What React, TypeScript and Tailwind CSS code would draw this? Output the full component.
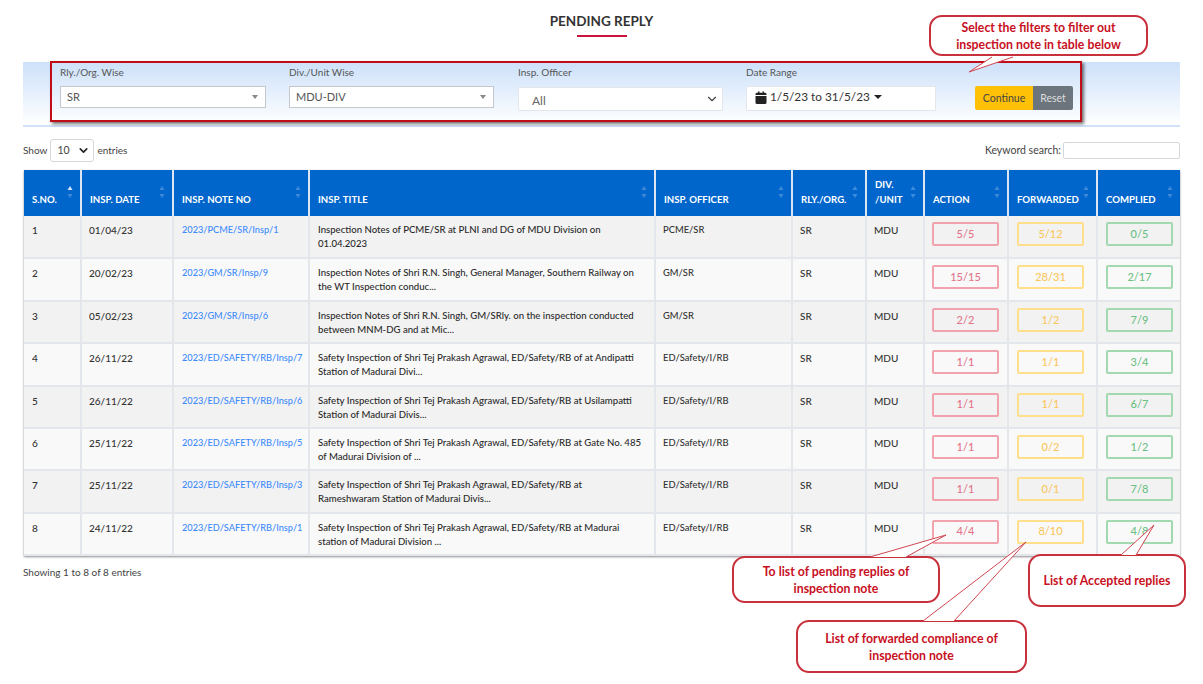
import React from 'react';
import { ChevronDown } from 'lucide-react';

const font = '[font-family:Lato,"Noto_Sans",sans-serif]';

const columns = [
  { label: 'S.NO.', width: 'w-[57px]', active: true },
  { label: 'INSP. DATE', width: 'w-[92px]' },
  { label: 'INSP. NOTE NO', width: 'w-[136px]' },
  { label: 'INSP. TITLE', width: 'w-[346px]' },
  { label: 'INSP. OFFICER', width: 'w-[137px]' },
  { label: 'RLY./ORG.', width: 'w-[74px]' },
  { label: 'DIV.\n/UNIT', width: 'w-[58px]' },
  { label: 'ACTION', width: 'w-[84px]' },
  { label: 'FORWARDED', width: 'w-[89px]' },
  { label: 'COMPLIED', width: 'w-[83px]' },
];

const rows = [
  ['01/04/23', '2023/PCME/SR/Insp/1', 'Inspection Notes of PCME/SR at PLNI and DG of MDU Division on\n01.04.2023', 'PCME/SR', '5/5', '5/12', '0/5'],
  ['20/02/23', '2023/GM/SR/Insp/9', 'Inspection Notes of Shri R.N. Singh, General Manager, Southern Railway on\nthe WT Inspection conduc...', 'GM/SR', '15/15', '28/31', '2/17'],
  ['05/02/23', '2023/GM/SR/Insp/6', 'Inspection Notes of Shri R.N. Singh, GM/SRly. on the inspection conducted\nbetween MNM-DG and at Mic...', 'GM/SR', '2/2', '1/2', '7/9'],
  ['26/11/22', '2023/ED/SAFETY/RB/Insp/7', 'Safety Inspection of Shri Tej Prakash Agrawal, ED/Safety/RB of at Andipatti\nStation of Madurai Divi...', 'ED/Safety/I/RB', '1/1', '1/1', '3/4'],
  ['26/11/22', '2023/ED/SAFETY/RB/Insp/6', 'Safety Inspection of Shri Tej Prakash Agrawal, ED/Safety/RB at Usilampatti\nStation of Madurai Divis...', 'ED/Safety/I/RB', '1/1', '1/1', '6/7'],
  ['25/11/22', '2023/ED/SAFETY/RB/Insp/5', 'Safety Inspection of Shri Tej Prakash Agrawal, ED/Safety/RB at Gate No. 485\nof Madurai Division of ...', 'ED/Safety/I/RB', '1/1', '0/2', '1/2'],
  ['25/11/22', '2023/ED/SAFETY/RB/Insp/3', 'Safety Inspection of Shri Tej Prakash Agrawal, ED/Safety/RB at\nRameshwaram Station of Madurai Divis...', 'ED/Safety/I/RB', '1/1', '0/1', '7/8'],
  ['24/11/22', '2023/ED/SAFETY/RB/Insp/1', 'Safety Inspection of Shri Tej Prakash Agrawal, ED/Safety/RB at Madurai\nstation of Madurai Division ...', 'ED/Safety/I/RB', '4/4', '8/10', '4/8'],
];

const SortIcon = ({ active }: { active?: boolean }) => (
  <svg width="6" height="14" viewBox="0 0 6 14" className="absolute right-[7px] top-[15px]">
    <path d="M3 1 L5.5 5 H0.5 Z" fill={active ? '#cfe3fa' : '#3f8ad8'} />
    <path d="M3 13 L5.5 9 H0.5 Z" fill="#3f8ad8" />
  </svg>
);

const Badge = ({ value, tone }: { value: string; tone: 'red' | 'yellow' | 'green' }) => {
  const cls = {
    red: 'border-[#f0a3ad] text-[#e4738a]',
    yellow: 'border-[#ffdf8c] text-[#fbc65c]',
    green: 'border-[#a3d9b1] text-[#6cc084]',
  }[tone];
  return (
    <div className={`flex h-[24px] w-[67px] items-center justify-center rounded-[2px] border-2 text-[11px] ${cls}`}>
      {value}
    </div>
  );
};

const Callout = ({ className, lines }: { className: string; lines: string[] }) => (
  <div className={`absolute flex flex-col items-center justify-center rounded-[13px] border-2 border-[#c8303c] bg-white text-[12.3px] font-bold leading-[17px] text-[#c8101e] ${className}`}>
    {lines.map(line => (
      <span key={line}>{line}</span>
    ))}
  </div>
);

export default function App() {
  return (
    <div className={`relative h-[684px] w-[1203px] overflow-hidden bg-white text-[#333] ${font}`}>
      {/* Heading */}
      <div className="flex flex-col items-center pt-[12px]">
        <h1 className="text-[13.5px] font-bold leading-[18px] text-[#333]">PENDING REPLY</h1>
        <div className="mt-[5px] h-[2px] w-[50px] bg-[#c8143c]" />
      </div>

      {/* Filters */}
      <div className="ml-[23px] mt-[25px] flex h-[65px] w-[1157px] border-b-2 border-[#cfe2f8] bg-gradient-to-b from-[#cde1fa] to-white pl-[37px] pt-[4px]">
        <div className="w-[229px]">
          <div className="text-[10px] leading-[13px] text-[#555]">Rly./Org. Wise</div>
          <div className="mt-[7px] flex h-[22px] w-[206px] items-center justify-between border border-[#c4c8cc] bg-white pl-[6px] pr-[7px] text-[11px] text-[#555]">
            SR
            <span className="h-0 w-0 border-x-[3px] border-t-[4px] border-x-transparent border-t-[#888]" />
          </div>
        </div>
        <div className="w-[229px]">
          <div className="text-[10px] leading-[13px] text-[#555]">Div./Unit Wise</div>
          <div className="mt-[7px] flex h-[22px] w-[205px] items-center justify-between border border-[#c4c8cc] bg-white pl-[6px] pr-[7px] text-[11px] text-[#555]">
            MDU-DIV
            <span className="h-0 w-0 border-x-[3px] border-t-[4px] border-x-transparent border-t-[#888]" />
          </div>
        </div>
        <div className="w-[228px]">
          <div className="text-[10px] leading-[13px] text-[#555]">Insp. Officer</div>
          <div className="mt-[8px] flex h-[24px] w-[205px] items-center justify-between rounded-[2px] border border-[#e3e6ea] bg-white pl-[13px] pr-[3px] pt-[4px] text-[12px] text-[#666]">
            All
            <ChevronDown size={14} strokeWidth={2} className="-mt-[4px] text-[#444]" />
          </div>
        </div>
        <div className="w-[229px]">
          <div className="text-[10px] leading-[13px] text-[#555]">Date Range</div>
          <div className="mt-[7px] flex h-[25px] w-[190px] items-center gap-[3px] border border-[#e3e6ea] bg-white pb-[3px] pl-[8px] text-[11.8px] text-[#333]">
            <svg width="12" height="13" viewBox="0 0 12 13" fill="#222">
              <path d="M0.5 5 H11.5 V11.5 Q11.5 13 10 13 H2 Q0.5 13 0.5 11.5 Z" />
              <path d="M0.5 4 V3.2 Q0.5 1.8 2 1.8 H3 V0.5 H4.5 V1.8 H7.5 V0.5 H9 V1.8 H10 Q11.5 1.8 11.5 3.2 V4 Z" />
            </svg>
            <span>1/5/23 to 31/5/23</span>
            <span className="ml-[1px] h-0 w-0 border-x-[4px] border-t-[4px] border-x-transparent border-t-[#222]" />
          </div>
        </div>
        <div className="mt-[20px] flex h-[24px] text-[10.5px]">
          <button className="flex w-[58px] items-center justify-center rounded-l-[2px] bg-[#ffc107] pt-[2px] text-[#444]">Continue</button>
          <button className="flex w-[40px] items-center justify-center rounded-r-[2px] bg-[#6c757d] pt-[2px] text-[#ddd]">Reset</button>
        </div>
      </div>

      {/* Table controls */}
      <div className="ml-[23px] mt-[12px] flex w-[1157px] items-center justify-between">
        <div className="flex items-center text-[10px] text-[#444]">
          Show
          <div className="mx-[3px] flex h-[23px] w-[44px] items-center justify-between rounded-[3px] border border-[#d5d8dc] bg-white pl-[6px] pr-[3px] text-[10.5px]">
            10
            <ChevronDown size={13} strokeWidth={3} className="text-[#222]" />
          </div>
          entries
        </div>
        <div className="flex items-center text-[10.5px] text-[#444]">
          Keyword search:
          <input className="ml-[2px] h-[17px] w-[117px] rounded-[2px] border border-[#d5d8dc] bg-white" />
        </div>
      </div>

      {/* Table */}
      <table className="ml-[24px] mt-[8px] w-[1156px] table-fixed border-collapse shadow-[0_1px_2px_rgba(0,0,0,0.45)]">
        <thead>
          <tr className="h-[46px] bg-[#0066cc]">
            {columns.map(col => (
              <th
                key={col.label}
                className={`relative whitespace-pre border-x-2 border-[#dbe6f2] pb-[9px] pl-[8px] text-left align-bottom text-[9.6px] font-bold leading-[15px] text-white first:border-l-0 last:border-r-0 ${col.width}`}
              >
                {col.label}
                <SortIcon active={col.active} />
              </th>
            ))}
          </tr>
        </thead>
        <tbody>
          {rows.map((row, i) => (
            <tr key={row[1]} className={`h-[42.4px] border-b-2 border-[#e3e6ea] text-[10px] font-medium ${i % 2 === 0 ? 'bg-[#f2f2f2]' : 'bg-[#f9f9f9]'}`}>
              <td className="border-r-2 border-[#e3e6ea] pl-[8px] pt-[7px] align-top leading-[14px]">{i + 1}</td>
              <td className="border-r-2 border-[#e3e6ea] pl-[7px] pt-[7px] align-top leading-[14px]">{row[0]}</td>
              <td className="whitespace-nowrap border-r-2 border-[#e3e6ea] pl-[8px] pt-[7px] align-top text-[9.2px] leading-[14px] text-[#3d8bfd]">{row[1]}</td>
              <td className="whitespace-pre border-r-2 border-[#e3e6ea] pl-[8px] pt-[7px] align-top text-[9.6px] leading-[14px] text-[#2a2a2a]">{row[2]}</td>
              <td className="border-r-2 border-[#e3e6ea] pl-[7px] pt-[7px] align-top text-[9.4px] leading-[14px]">{row[3]}</td>
              <td className="border-r-2 border-[#e3e6ea] pl-[7px] pt-[7px] align-top leading-[14px]">SR</td>
              <td className="border-r-2 border-[#e3e6ea] pl-[7px] pt-[7px] align-top leading-[14px]">MDU</td>
              <td className="border-r-2 border-[#e3e6ea] pl-[7px] pt-[6px] align-top"><Badge value={row[4]} tone="red" /></td>
              <td className="border-r-2 border-[#e3e6ea] pl-[8px] pt-[6px] align-top"><Badge value={row[5]} tone="yellow" /></td>
              <td className="pl-[8px] pt-[6px] align-top"><Badge value={row[6]} tone="green" /></td>
            </tr>
          ))}
        </tbody>
      </table>

      <div className="ml-[23px] mt-[9px] text-[10px] leading-[14px] text-[#444]">Showing 1 to 8 of 8 entries</div>

      {/* Annotation layer */}
      <div className="absolute left-[50px] top-[61px] h-[61px] w-[1032px] border-2 border-[#c00d17] shadow-[2px_2px_3px_rgba(0,0,0,0.55)]" />
      <Callout className="left-[929px] top-[15px] h-[41px] w-[219px]" lines={['Select the filters to filter out', 'inspection note in table below']} />
      <Callout className="left-[732px] top-[556px] h-[47px] w-[208px]" lines={['To list of pending replies of', 'inspection note']} />
      <Callout className="left-[796px] top-[620px] h-[53px] w-[231px]" lines={['List of forwarded compliance of', 'inspection note']} />
      <Callout className="left-[1028px] top-[554px] h-[53px] w-[158px]" lines={['List of Accepted replies']} />
      <svg className="pointer-events-none absolute left-0 top-0" width="1203" height="684" viewBox="0 0 1203 684">
        <g fill="#fff" stroke="#d0454f" strokeWidth="1">
          <polyline points="992,57 969,72 1013,57" />
          <polyline points="870,557 946,535 906,557" />
          <polyline points="923,621 1026,542 954,621" />
          <polyline points="1121,555 1154,525 1136,555" />
        </g>
      </svg>
    </div>
  );
}
